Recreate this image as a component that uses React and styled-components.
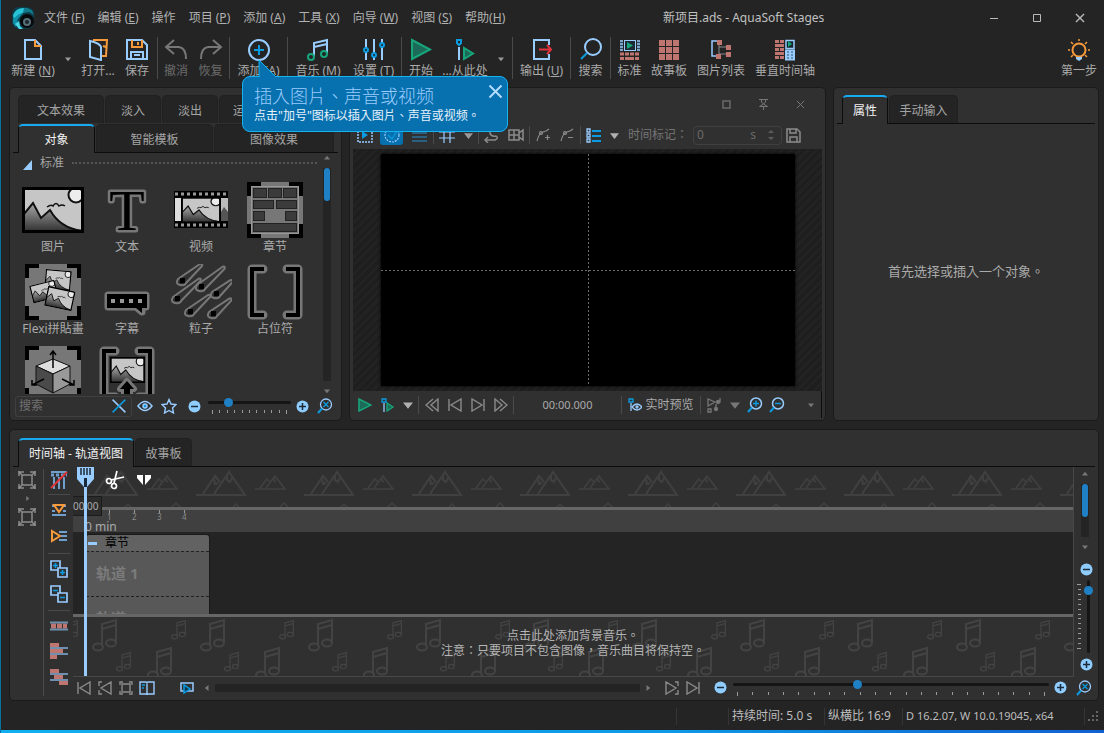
import React from "react";
import styled, { createGlobalStyle, css } from "styled-components";

const c = {
  page: "#242424",
  panel: "#303030",
  edge: "#1a1a1a",
  line: "#0c0c0c",
  sep: "#4a4a4a",
  text: "#aaaaaa",
  dim: "#6a6a6a",
  sky: "#99ccff",
  cyan: "#0a9be0",
  blue: "#1f80c6",
  orange: "#f79a3c",
  green: "#17a67c",
  leaf: "#1c6b58",
  red: "#e0333b",
  brick: "#bf7670",
  grey: "#8a8a8a",
};
const sans = '"Noto Sans", "Noto Sans CJK SC", sans-serif';
const sansTC = '"Noto Sans", "Noto Sans CJK TC", sans-serif';

const Global = createGlobalStyle`
  *, *::before, *::after { box-sizing: border-box; }
  body { margin: 0; background: ${c.page}; }
  body, button, input { font-family: ${sans}; font-size: 12px; line-height: 16px; color: ${c.text}; }
  button { background: none; border: 0; padding: 0; margin: 0; cursor: default; }
  svg { display: block; flex: none; }
`;

/* ---------- page frame ---------- */
const Shell = styled.div`
  display: flex;
  flex-direction: column;
  height: 100vh;
  min-height: 640px;
  min-width: 1000px;
  overflow: hidden;
  border-left: 1px solid #0a6f9f;
  background: ${c.page};
`;
const AccentBar = styled.div`
  height: 3px;
  flex: none;
  background: linear-gradient(90deg, #10b0f0, #0d9ae6 60%, #1260d0);
`;
const Main = styled.main`
  flex: 1;
  min-height: 0;
  display: flex;
  flex-direction: column;
  gap: 8px;
  padding: 0 5px 0 8px;
`;
const Docks = styled.div`
  flex: 1;
  min-height: 0;
  display: flex;
  gap: 7px;
`;
const Panel = styled.section`
  display: flex;
  flex-direction: column;
  min-width: 0;
  min-height: 0;
  background: ${c.panel};
  border: 1px solid ${c.edge};
  border-radius: 5px;
  padding: ${(p) => p.$pad || "7px 3px 2px"};
  flex: ${(p) => p.$flex || "none"};
`;

/* ---------- title bar ---------- */
const TitleBar = styled.header`
  display: flex;
  align-items: center;
  height: 34px;
  flex: none;
  padding: 1px 3px 0 11px;
`;
const MenuNav = styled.nav`
  display: flex;
  gap: 13px;
  margin-left: 10px;
  width: 619px;
`;
const MenuItem = styled.button`
  color: #b2b2b2;
  white-space: nowrap;
`;
const AppTitle = styled.h1`
  margin: 0;
  flex: 1;
  font-size: 12px;
  line-height: 16px;
  font-weight: 400;
  color: #c0c0c0;
  white-space: nowrap;
`;
const WindowButton = styled.button`
  width: 43px;
  height: 30px;
  display: grid;
  place-items: center;
`;

/* ---------- main toolbar ---------- */
const Toolbar = styled.div`
  display: flex;
  height: 53px;
  flex: none;
  padding: 3px 0 0 7px;
`;
const ToolSlot = styled.div`
  position: relative;
  flex: none;
`;
const ToolButton = styled.button`
  display: flex;
  flex-direction: column;
  align-items: center;
  gap: 2px;
  flex: none;
  width: ${(p) => p.$w}px;
  height: 44px;
  color: ${(p) => (p.disabled ? "#6c6c6c" : c.text)};
  white-space: nowrap;
`;
const DropButton = styled.button`
  width: ${(p) => p.$w || 20}px;
  display: grid;
  place-items: center;
  flex: none;
  height: ${(p) => p.$h || 44}px;
`;
const Divider = styled.span`
  flex: none;
  width: 1px;
  height: ${(p) => p.$h || 42}px;
  margin: 0 1px;
  background: ${c.sep};
`;
const Spacer = styled.span`
  flex: 1;
`;

/* ---------- tooltip ---------- */
const Callout = styled.div`
  position: absolute;
  z-index: 5;
  left: 11px;
  top: 39px;
  width: 266px;
  height: 56px;
  padding: 8px 11px;
  background: #0770ae;
  border: 1px solid #16b3f3;
  border-radius: 8px;
  color: #e6f2fb;
  font-family: ${sansTC};
  white-space: nowrap;
`;
const CalloutTitle = styled.strong`
  display: block;
  font-size: 18px;
  line-height: 22px;
  font-weight: 300;
  color: ${c.sky};
`;
const CalloutText = styled.p`
  margin: 0;
  font-size: 12px;
  line-height: 18px;
`;
const CalloutTail = styled.svg`
  position: absolute;
  left: 15px;
  top: -18px;
`;
const CalloutClose = styled.button`
  position: absolute;
  right: 4px;
  top: 7px;
`;

/* ---------- tabs ---------- */
const TabRow = styled.div`
  display: flex;
  gap: 1px;
  flex: none;
  height: 29px;
  padding: 0 4px 0 5px;
  border-bottom: ${(p) => (p.$plain ? 0 : `1px solid ${c.line}`)};
`;
const Tab = styled.button`
  flex: ${(p) => (p.$w ? "none" : "1")};
  width: ${(p) => (p.$w ? `${p.$w}px` : "auto")};
  height: 28px;
  padding: 2px 0 0;
  border-radius: 5px 5px 0 0;
  background: #242424;
  border: 1px solid #202020;
  border-bottom: 0;
  color: #a4a4a4;
  white-space: nowrap;
  text-align: ${(p) => (p.$start ? "left" : "center")};
  text-indent: ${(p) => (p.$start ? "13px" : "0")};
  ${(p) =>
    p.$on &&
    css`
      height: 29px;
      margin-bottom: -1px;
      padding: 0;
      border-color: ${c.line};
      border-top: 2px solid #16aaf0;
      background: ${c.panel};
      color: #f2f2f2;
    `}
`;

/* ---------- object library ---------- */
const Library = styled.div`
  flex: 1;
  min-height: 0;
  display: flex;
  padding: 2px 6px 0 3px;
`;
const LibraryBody = styled.div`
  flex: 1;
  min-width: 0;
  overflow: hidden;
`;
const GroupHead = styled.div`
  display: flex;
  align-items: center;
  gap: 8px;
  height: 16px;
  padding: 0 5px 0 7px;
  color: #a4a4a4;
  &::after {
    content: "";
    flex: 1;
    border-top: 2px dotted #555;
  }
`;
const ItemGrid = styled.div`
  display: grid;
  grid-template-columns: repeat(4, 74px);
  grid-auto-rows: 82px;
  padding-top: 11px;
`;
const Item = styled.button`
  display: flex;
  flex-direction: column;
  align-items: center;
  justify-content: flex-start;
  gap: 1px;
  white-space: nowrap;
`;
const VScroll = styled.div`
  display: flex;
  flex-direction: column;
  align-items: center;
  justify-content: space-between;
  width: 10px;
  flex: ${(p) => p.$flex || "none"};
`;
const VTrack = styled.div`
  flex: 1;
  width: 8px;
  margin: 7px 0;
  background: #242424;
`;
const VThumb = styled.div`
  height: 33px;
  margin: 0 1px;
  border-radius: 3px;
  background: ${c.blue};
`;
const SearchRow = styled.div`
  display: flex;
  align-items: center;
  height: 24px;
  flex: none;
  padding: 0 0 0 2px;
`;
const SearchBox = styled.label`
  display: flex;
  align-items: center;
  width: 117px;
  height: 21px;
  padding: 0 4px 0 3px;
  border: 1px solid #404040;
  border-radius: 3px;
`;
const PlainInput = styled.input`
  flex: 1;
  min-width: 0;
  padding: 0;
  border: 0;
  outline: 0;
  background: none;
  color: ${c.dim};
  &::placeholder {
    color: #707070;
    opacity: 1;
  }
`;

/* ---------- icon buttons and sliders ---------- */
const IconButton = styled.button`
  width: ${(p) => p.$w || 22}px;
  height: ${(p) => p.$h || 22}px;
  flex: none;
  display: flex;
  align-items: center;
  justify-content: center;
  gap: 3px;
  white-space: nowrap;
`;
const IconFill = styled.span`
  display: grid;
  place-items: center;
  width: 23px;
  height: 20px;
  border-radius: 3px;
  background: #0770ae;
`;
const SliderBox = styled.div`
  display: flex;
  flex-direction: ${(p) => (p.$v ? "row-reverse" : "column")};
  gap: 3px;
  flex: ${(p) => (p.$v ? "1" : "none")};
  min-height: 0;
  width: ${(p) => (p.$v ? "auto" : `${p.$w}px`)};
`;
const Range = styled.input`
  appearance: none;
  margin: 0;
  background: none;
  ${(p) =>
    p.$v
      ? "writing-mode: vertical-lr; width: 9px; height: 100%;"
      : "width: 100%; height: 9px;"}
  &::-webkit-slider-runnable-track {
    border-radius: 2px;
    background: #151515;
    ${(p) => (p.$v ? "width: 3px; height: 100%;" : "height: 3px;")}
  }
  &::-webkit-slider-thumb {
    appearance: none;
    width: 9px;
    height: 9px;
    border-radius: 50%;
    background: ${c.blue};
    ${(p) => (p.$v ? "margin-left: -3px;" : "margin-top: -3px;")}
  }
`;
const Ticks = styled.div`
  display: flex;
  justify-content: space-between;
  flex-direction: ${(p) => (p.$v ? "column" : "row")};
  align-items: ${(p) => (p.$v ? "flex-end" : "flex-start")};
  padding: ${(p) => (p.$v ? "4px 0" : "0 4px")};
  & > i {
    background: #9a9a9a;
    width: ${(p) => (p.$v ? 3 : 1)}px;
    height: ${(p) => (p.$v ? 1 : 3)}px;
  }
  & > i:first-child,
  & > i:last-child {
    width: ${(p) => (p.$v ? 4 : 1)}px;
    height: ${(p) => (p.$v ? 1 : 4)}px;
  }
`;

/* ---------- preview ---------- */
const DockCaption = styled.div`
  display: flex;
  justify-content: flex-end;
  height: 32px;
  flex: none;
  padding: 4px 3px 0 0;
`;
const ViewBar = styled.div`
  display: flex;
  align-items: center;
  flex: none;
  height: 28px;
`;
const FieldLabel = styled.label`
  color: #757575;
  font-family: ${sansTC};
  white-space: nowrap;
  width: 69px;
  padding-left: 4px;
`;
const TimeField = styled.div`
  display: flex;
  align-items: center;
  width: 89px;
  height: 19px;
  padding: 0 7px 0 3px;
  border: 1px solid #404040;
  border-radius: 4px;
  color: ${c.dim};
`;
const Unit = styled.span`
  margin-right: 12px;
`;
const Stage = styled.div`
  flex: 1;
  min-height: 0;
  display: grid;
  justify-items: center;
  padding: 5px 27px 5px 28px;
  background: repeating-linear-gradient(135deg, #1e1e1e 0 3px, #222 3px 6px);
`;
const Canvas = styled.div`
  width: 100%;
  height: 100%;
  background:
    repeating-linear-gradient(180deg, #6c6c6c 0 2px, transparent 2px 4px) 50% 0 / 1px 100% no-repeat,
    repeating-linear-gradient(90deg, #6c6c6c 0 2px, transparent 2px 4px) 0 50% / 100% 1px no-repeat,
    #000;
  box-shadow: 0 0 3px #000;
`;
const PlayBar = styled.div`
  display: flex;
  align-items: center;
  flex: none;
  height: 27px;
  border-right: 1px solid ${c.line};
`;
const Clock = styled.output`
  width: 105px;
  text-align: center;
  font-size: 11px;
`;

/* ---------- properties ---------- */
const EmptyNote = styled.p`
  flex: 1;
  display: grid;
  place-items: center;
  margin: 0;
  font-family: ${sansTC};
  font-size: 13px;
  line-height: 18px;
`;

/* ---------- timeline ---------- */
const TimelineBody = styled.div`
  display: flex;
  height: 231px;
`;
const SideTools = styled.div`
  display: flex;
  flex-direction: column;
  align-items: center;
  width: ${(p) => p.$w}px;
  flex: none;
  border-right: ${(p) => (p.$line ? `1px solid ${c.sep}` : 0)};
  padding-right: ${(p) => (p.$line ? 2 : 0)}px;
  margin: 2px 0;
`;
const SideRule = styled.span`
  width: 22px;
  height: 1px;
  flex: none;
  margin: 3px 0;
  background: ${c.sep};
`;
const TimelineMain = styled.div`
  flex: 1;
  min-width: 0;
  display: flex;
  flex-direction: column;
`;
const TrackRow = styled.div`
  display: flex;
  height: 210px;
`;
const Tracks = styled.div`
  position: relative;
  flex: 1;
  min-width: 0;
  display: flex;
  flex-direction: column;
  overflow: hidden;
  border-right: 1px solid #484848;
  border-bottom: 1px solid #484848;
`;
const Deco = styled.div`
  position: relative;
  height: ${(p) => p.$h}px;
  flex: none;
  overflow: hidden;
`;
const DecoArt = styled.svg`
  position: absolute;
  inset: 0;
  width: 100%;
  height: 100%;
`;
const Ruler = styled.div`
  height: 25px;
  flex: none;
  border-top: 3px solid #666;
  background: #404040;
`;
const RulerMarks = styled.div`
  display: flex;
  height: 11px;
  padding-left: 34px;
  font-size: 8px;
  line-height: 8px;
  color: #8a8a8a;
`;
const Mark = styled.span`
  width: 25px;
  display: flex;
  flex-direction: column;
  align-items: flex-start;
  &::before {
    content: "";
    width: 1px;
    height: 3px;
    margin-left: 2px;
    background: #999;
  }
`;
const RulerUnit = styled.span`
  display: block;
  padding-left: 12px;
  line-height: 11px;
`;
const Lane = styled.div`
  height: 82px;
  flex: none;
  overflow: hidden;
  padding: 2px 0 0 13px;
  background: ${c.page};
`;
const Chapter = styled.div`
  width: 124px;
  border: 1px solid #1a1a1a;
  border-left: 0;
  border-radius: 4px 4px 0 0;
  background: #585858;
`;
const ChapterHead = styled.div`
  display: flex;
  align-items: center;
  gap: 8px;
  height: 16px;
  padding-left: 2px;
  color: #000;
  background: #626262;
  border-radius: 4px 4px 0 0;
`;
const Minus = styled.i`
  width: 9px;
  height: 3px;
  background: ${c.sky};
`;
const Track = styled.div`
  height: 45px;
  padding: 11px 0 0 10px;
  border-top: 1px dashed #222;
  font-size: 15px;
  line-height: 20px;
  font-weight: 700;
  color: #7b7b7b;
`;
const MusicLane = styled.div`
  position: relative;
  flex: 1;
  overflow: hidden;
  border-top: 3px solid #666;
  background: ${c.panel};
`;
const MusicNote = styled.p`
  position: relative;
  margin: 0;
  padding-top: 11px;
  text-align: center;
  font-family: ${sansTC};
  line-height: 15px;
  color: #b4b4b4;
`;
const Playhead = styled.div`
  position: absolute;
  left: 11px;
  top: 20px;
  bottom: 0;
  width: 3px;
  background: ${c.sky};
`;
const PlayheadTools = styled.div`
  position: absolute;
  left: 4px;
  top: 0;
  display: flex;
  gap: 11px;
`;
const TimeBadge = styled.div`
  position: absolute;
  left: 0;
  top: 29px;
  width: 29px;
  height: 20px;
  padding-top: 2px;
  overflow: hidden;
  background: #2b2b2b;
  border: 1px solid #1c1c1c;
  border-left: 0;
  font-size: 10px;
  line-height: 14px;
`;
const Zoomer = styled.aside`
  display: flex;
  flex-direction: column;
  align-items: center;
  width: 21px;
  flex: none;
  padding: 4px 0 2px;
`;
const ZoomStep = styled(IconButton)`
  width: 21px;
  padding-left: 4px;
  margin-top: ${(p) => p.$top || 0}px;
`;
const Transport = styled.div`
  display: flex;
  align-items: center;
  height: 21px;
`;
const HTrack = styled.div`
  flex: 1;
  height: 8px;
  background: #242424;
`;
const Gap = styled.span`
  width: ${(p) => p.$w || 5}px;
`;

/* ---------- status bar ---------- */
const StatusBar = styled.footer`
  display: flex;
  align-items: center;
  justify-content: flex-end;
  height: 29px;
  flex: none;
  padding: 2px 5px 0 0;
  color: #bdbdbd;
`;
const StatusCell = styled.span`
  width: ${(p) => p.$w}px;
  height: 17px;
  padding-left: 3px;
  border-left: 1px solid #353535;
  white-space: nowrap;
  font-size: ${(p) => (p.$small ? 11 : 12)}px;
`;

/* ---------- icons ---------- */
const Ic = ({ w = 24, h = 24, s = c.sky, k = 2, f = "none", children }) => (
  <svg width={w} height={h} viewBox={`0 0 ${w} ${h}`} fill={f} stroke={s} strokeWidth={k} aria-hidden="true">
    {children}
  </svg>
);
const Caret = ({ w = 7, color = "#9a9a9a", dir = "down" }) => {
  const rot = { down: 0, up: 180, left: 90, right: 270 }[dir];
  return (
    <svg width={w} height={w} viewBox="0 0 8 8" aria-hidden="true">
      <path d="M0 2h8L4 7z" fill={color} transform={`rotate(${rot} 4 4)`} />
    </svg>
  );
};
const Logo = () => (
  <Ic w={22} h={22} s="none">
    <rect width="22" height="22" rx="7" fill="#0b3d4a" />
    <path d="M1 8Q4 1 11 1l7 1-6 3-6 4-4 5z" fill="#27c4d8" />
    <path d="M1 12l6-5 4-1-5 6-2 8-3-4z" fill="#0f90a8" />
    <path d="M12 1l8 2 2 5-5-3-6 1z" fill="#12788c" />
    <circle cx="15" cy="14" r="7" fill="#07090a" />
    <circle cx="15" cy="15" r="3" fill="#1c262a" stroke="#56707a" />
    <path d="M3 17l4-3 1 5 3 3H7z" fill="#49d6e2" />
  </Ic>
);
const NewIcon = () => (
  <Ic>
    <path d="M4 3h10l6 6v13H4z" />
    <path d="M14 3v6h6" stroke={c.orange} />
  </Ic>
);
const OpenIcon = () => (
  <Ic>
    <path d="M7 3h14l-1 16h-5M20 10l-3-1" stroke={c.orange} />
    <path d="M4 4l4 1q6 2 7 5v13L4 20z" />
  </Ic>
);
const SaveIcon = () => (
  <Ic>
    <path d="M2 3h15l5 5v14H2z" />
    <path d="M7 3v7h10V3M13 5v3" stroke={c.orange} />
    <path d="M6 22v-7h12v7M9 18h6" />
  </Ic>
);
const UndoIcon = ({ flip }) => (
  <Ic s="#777">
    <g transform={flip ? "translate(24 0) scale(-1 1)" : undefined}>
      <path d="M10 3l-8 7 8 7M2 10h13q7 1 7 12" />
    </g>
  </Ic>
);
const AddIcon = () => (
  <Ic>
    <circle cx="12" cy="13" r="10" />
    <path d="M12 8v10M7 13h10" stroke={c.cyan} />
  </Ic>
);
const MusicIcon = () => (
  <Ic>
    <path d="M8 19V6l13-3v13M8 10l13-3" />
    <circle cx="5" cy="20" r="3" stroke={c.green} />
    <circle cx="18" cy="17" r="3" stroke={c.green} />
  </Ic>
);
const SettingsIcon = () => (
  <Ic>
    <path d="M4 2v9M4 15v8M12 2v14M12 20v3M20 2v4M20 10v13" />
    <g stroke={c.cyan}>
      <circle cx="4" cy="13" r="2" />
      <circle cx="12" cy="18" r="2" />
      <circle cx="20" cy="8" r="2" />
    </g>
  </Ic>
);
const StartIcon = () => (
  <Ic s={c.green} f={c.leaf}>
    <path d="M3 3v19l18-9.500z" />
  </Ic>
);
const FromHereIcon = () => (
  <Ic s={c.green}>
    <path d="M11 11v11l9-5.500z" fill={c.leaf} />
    <path d="M6 10v13" stroke={c.sky} />
    <path d="M4 3h4v3l-2 2-2-2z" stroke={c.cyan} />
  </Ic>
);
const ExportIcon = () => (
  <Ic>
    <path d="M19 8V3H4v19h15v-5" />
    <path d="M9 12.500h12M17 8l4 4.500-4 4.500" stroke={c.red} />
  </Ic>
);
const SearchIcon = () => (
  <Ic>
    <circle cx="14" cy="10" r="8" />
    <path d="M8 16l-6 6" stroke={c.cyan} />
  </Ic>
);
const StandardIcon = () => (
  <Ic s="none">
    <rect x="6.500" y="3.500" width="11" height="10" fill="#1c2a33" stroke={c.sky} strokeWidth="1" />
    <path d="M9 5v7l6-3.500z" fill={c.green} />
    <path d="M2 3h3v11H2zM19 3h3v11h-3z" fill="#7fa6c8" />
    <path d="M2 5.500h20M2 8.500h20M2 11.500h20" stroke="#2f4a60" strokeWidth="1" strokeDasharray="3 14" />
    <path d="M2 17h20" stroke={c.brick} strokeWidth="3" strokeDasharray="4 1" />
    <path d="M2 21.500h20" stroke={c.brick} strokeWidth="3" strokeDasharray="4 1 9 1" />
  </Ic>
);
const BoardIcon = () => (
  <Ic s="none" f={c.brick}>
    {[2, 9, 16].map((y) => [2, 9, 16].map((x) => <rect key={x + y * 30} x={x} y={y + 1} width="6" height="6" />))}
  </Ic>
);
const ListIcon = () => (
  <Ic k="1">
    <path d="M8 4H3v15h4" stroke={c.sky} strokeWidth="1.500" />
    <path d="M10 7v12M10 10h7M10 17h7" stroke={c.grey} />
    <g fill={c.brick} stroke="none">
      <rect x="8" y="3" width="5" height="5" />
      <rect x="17" y="8" width="5" height="5" />
      <rect x="17" y="15" width="5" height="5" />
      <rect x="7" y="17" width="5" height="5" />
    </g>
  </Ic>
);
const VerticalIcon = () => (
  <Ic s="none">
    <path d="M2 4.500h9M2 12.500h9M2 20.500h9" stroke={c.brick} strokeWidth="3" strokeDasharray="4 1" />
    <path d="M2 8.500h9M2 16.500h9" stroke={c.brick} strokeWidth="3" />
    <rect x="13" y="3.500" width="8" height="8" fill="#15272c" stroke={c.sky} strokeWidth="1.500" />
    <path d="M15 4v6l4-3z" fill={c.green} />
    <rect x="13" y="13.500" width="8" height="9" fill="#33526e" stroke={c.sky} />
    <path d="M13 16.500h9M13 19.500h9M17 13v9" stroke={c.sky} />
  </Ic>
);
const BulbIcon = () => (
  <Ic s={c.orange}>
    <circle cx="12" cy="13" r="6.500" />
    <path d="M12 2v2M4 5l2 2M20 5l-2 2M1 13h2M21 13h2M4 20l2-2M20 20l-2-2" strokeWidth="1.500" />
    <path d="M9 20h6v2l-3 2-3-2z" fill={c.sky} stroke="none" />
  </Ic>
);
const CrossIcon = ({ size = 10, color = "#b8b8b8", back = color, k = 1.5 }) => (
  <svg width={size} height={size} viewBox="0 0 10 10" strokeWidth={(k * 10) / size} aria-hidden="true">
    <path d="M1 1l8 8" stroke={color} />
    <path d="M9 1L1 9" stroke={back} />
  </svg>
);
const CircleSign = ({ plus }) => (
  <Ic w={13} h={13} s="#1c2b3a" k="1.500">
    <circle cx="6.500" cy="6.500" r="6" fill="#8fcdff" stroke="none" />
    <path d={plus ? "M3 6.500h7M6.500 3v7" : "M3 6.500h7"} />
  </Ic>
);
const FitIcon = () => (
  <Ic w={16} h={16} k="1.300">
    <circle cx="9" cy="6.500" r="5.500" />
    <path d="M5 10.500L1 15" stroke={c.cyan} strokeWidth="2" />
    <path d="M6.500 4l5 5M11.500 4l-5 5" stroke={c.cyan} />
  </Ic>
);
const ZoomIcon = ({ plus }) => (
  <Ic w={16} h={16} k="1.500">
    <circle cx="9" cy="6.500" r="5.500" />
    <path d="M5 10.500L1 15" stroke={c.cyan} strokeWidth="2" />
    <path d={plus ? "M6 6.500h6M9 3.500v6" : "M6 6.500h6"} stroke={c.cyan} />
  </Ic>
);
const EyeIcon = () => (
  <Ic w={16} h={12} k="1.500">
    <path d="M1 6q7-9 14 0-7 9-14 0z" />
    <circle cx="8" cy="6" r="2" fill={c.cyan} />
  </Ic>
);
const StarIcon = () => (
  <Ic w={16} h={16} k="1.400">
    <path d="M8 1.500l2 4.500 5 .5-3.500 3.500 1 5L8 12.500 3.500 15l1-5L1 6.500 6 6z" />
  </Ic>
);

/* picture used by several library items */
const Landscape = ({ x = 0, y = 0, w = 62, h = 46 }) => (
  <svg x={x} y={y} width={w} height={h} viewBox="0 0 62 46" preserveAspectRatio="none">
    <rect x="1.500" y="1.500" width="59" height="43" fill="#c6c6c6" stroke="none" />
    <path d="M2 27l9-11 8 15 9-8q10 18 32 20v1H2z" fill="url(#slope)" stroke="none" />
    <path d="M2 27l9-11 8 15 9-8q10 18 32 21" fill="none" stroke="#111" strokeWidth="2" />
    <circle cx="54" cy="8" r="7.500" fill="#ececec" stroke="#111" strokeWidth="2" />
    <path d="M25 20q4-3 6-1 3-5 6 0 3-2 6 0" fill="none" stroke="#111" strokeWidth="1.500" />
    <rect x="1.500" y="1.500" width="59" height="43" fill="none" stroke="#000" strokeWidth="3" />
  </svg>
);
const Slope = () => (
  <defs>
    <linearGradient id="slope" x1="0" y1="0" x2="0" y2="1">
      <stop offset="0" stopColor="#aaa" />
      <stop offset="1" stopColor="#333" />
    </linearGradient>
  </defs>
);
const Art = ({ children }) => (
  <svg width="62" height="56" viewBox="0 0 62 56" fill="none" aria-hidden="true">
    {children}
  </svg>
);
const Frame = () => (
  <>
    <path d="M3 0h56v56H3z" fill="#777" />
    <path d="M3 0h14v4H7v10H3zM59 0H45v4h10v10h4zM3 56h14v-4H7V42H3zM59 56H45v-4h10V42h4z" fill="#000" />
  </>
);
const Bracket = () => (
  <>
    <path d="M19 5H8v46h11M43 5h11v46H43" stroke="#777" strokeWidth="9" strokeLinejoin="round" strokeLinecap="round" />
    <path d="M20 5H8v46h12M42 5h12v46H42" stroke="#000" strokeWidth="4" />
  </>
);
const ImageArt = () => (
  <Art>
    <Slope />
    <Landscape y={5} />
  </Art>
);
const TextArt = () => (
  <Art>
    <text x="31" y="48" textAnchor="middle" fontFamily="Liberation Serif, serif" fontSize="58" fill="#000" stroke="#777" strokeWidth="5" strokeLinejoin="round" paintOrder="stroke">
      T
    </text>
  </Art>
);
const VideoArt = () => (
  <Art>
    <rect x="4" y="9" width="54" height="37" fill="#000" />
    <path d="M5 12h52M5 43h52" stroke="#999" strokeWidth="3" strokeDasharray="3 3" />
    <rect x="5" y="16" width="7" height="23" fill="#ddd" />
    <Landscape x={11} y={15} w={40} h={26} />
    <rect x="51" y="16" width="7" height="23" fill="#bbb" />
    <path d="M51 30l3-5 4 5v9h-7z" fill="#555" />
  </Art>
);
const ChapterArt = () => (
  <Art>
    <Frame />
    <g fill="#3b3b3b" stroke="#222">
      <rect x="9.500" y="6.500" width="13" height="9" />
      <rect x="24.500" y="6.500" width="13" height="9" />
      <rect x="39.500" y="6.500" width="13" height="9" />
      <rect x="9.500" y="18.500" width="20" height="8" />
      <rect x="32.500" y="18.500" width="20" height="8" />
      <rect x="9.500" y="29.500" width="11" height="9" />
      <rect x="41.500" y="29.500" width="11" height="9" />
      <rect x="9.500" y="41.500" width="43" height="8" />
    </g>
    <rect x="7.500" y="4.500" width="47" height="47" stroke="#999" />
  </Art>
);
const FlexiArt = () => (
  <Art>
    <Frame />
    <g transform="rotate(5 36 16)"><Landscape x={23} y={6} w={26} h={20} /></g>
    <g transform="rotate(-14 20 28)"><Landscape x={9} y={19} w={26} h={18} /></g>
    <g transform="rotate(12 40 34)"><Landscape x={24} y={25} w={28} h={20} /></g>
  </Art>
);
const SubtitleArt = () => (
  <Art>
    <path d="M12 31h38v12h-4v5l-6-5H12z" stroke="#777" strokeWidth="7" fill="#777" strokeLinejoin="round" />
    <path d="M11 30h40v14h-5v5l-6-5H11z" fill="#000" />
    <path d="M15 35h4v4h-4zM24 35h4v4h-4zM33 35h4v4h-4zM42 35h4v4h-4z" fill="#999" />
  </Art>
);
const Streak = ({ x, y, l = 1 }) => (
  <g transform={`translate(${x} ${y})`}>
    <path d={`M-4 -1L${18 * l} ${-16 * l}q3 -1 2 2L4 3q-1 3 -6 2t-2 -6z`} stroke="#777" strokeWidth="2" strokeLinejoin="round" />
    <path d="M-2 -2h5v5h-5z" fill="#000" />
  </g>
);
const ParticleArt = () => (
  <Art>
    <Streak x={12} y={16} />
    <Streak x={31} y={22} l={1.2} />
    <Streak x={46} y={29} l={0.8} />
    <Streak x={7} y={34} l={1.2} />
    <Streak x={20} y={47} />
    <Streak x={43} y={49} l={0.9} />
  </Art>
);
const PlaceholderArt = () => (
  <Art>
    <Bracket />
  </Art>
);
const CubeArt = () => (
  <Art>
    <Frame />
    <path d="M14 20l17-7 17 7-17 8z" fill="#ddd" stroke="#111" />
    <path d="M14 20l17 8v19l-17-9z" fill="#4a4a4a" stroke="#111" />
    <path d="M48 20l-17 8v19l17-9z" fill="#999" stroke="#111" />
    <path d="M31 22V5M28 9l3-4 3 4M22 33l-12 6M10 34v5h5M40 33l12 6M52 34v5h-5" stroke="#000" strokeWidth="1.500" />
  </Art>
);
const UploadArt = () => (
  <Art>
    <Bracket />
    <Landscape x={14} y={11} w={35} h={26} />
    <path d="M31 35l7 8h-4v10h-6V43h-4z" fill="#000" stroke="#777" strokeWidth="6" paintOrder="stroke" strokeLinejoin="round" />
  </Art>
);

const MountainArt = () => (
  <DecoArt aria-hidden="true">
    <defs>
      <pattern id="hills" width="108" height="64" patternUnits="userSpaceOnUse">
        <g fill="none" stroke="#404040" strokeWidth="2">
          <path d="M15 28h49L48 5 33 27M22 27L34 9l5 6M46 8v5l3 2 2-4M33 12l1 5 3-1" />
          <path strokeWidth="1.500" d="M74 22h30L94 9l-9 12M79 21l7-9 3 3M93 11v3l2 1" />
          <path strokeWidth="1.500" d="M50 42l5-5 5 5M98 41l5-5 5 5" />
        </g>
      </pattern>
    </defs>
    <rect width="100%" height="100%" fill="url(#hills)" />
  </DecoArt>
);
const NoteShape = ({ x, y, k }) => (
  <g transform={`translate(${x} ${y}) scale(${k})`}>
    <path d="M10 27V5l14-4v22M10 10l14-4" />
    <ellipse cx="6" cy="28" rx="5" ry="3.500" />
    <ellipse cx="19" cy="24" rx="5" ry="3.500" />
  </g>
);
const NotesArt = () => (
  <DecoArt aria-hidden="true">
    <defs>
      <pattern id="notes" width="108" height="64" patternUnits="userSpaceOnUse">
        <g fill="none" stroke="#434343" strokeWidth="2">
          <NoteShape x={19} y={2} k={1} />
          <NoteShape x={98} y={3} k={0.6} />
          <NoteShape x={-10} y={3} k={0.6} />
          <NoteShape x={43} y={35} k={0.6} />
          <NoteShape x={74} y={30} k={1} />
        </g>
      </pattern>
    </defs>
    <rect width="100%" height="100%" fill="url(#notes)" />
  </DecoArt>
);

/* small timeline icons */
const GroupIcon = () => (
  <Ic w={18} h={18} s={c.grey} k="1.500">
    <path d="M4 4h10v10H4zM0 1h6M1 0v5M18 1h-6M17 0v5M0 17h6M1 18v-5M18 17h-6M17 18v-5M1 1l4 4M17 1l-4 4M1 17l4-4M17 17l-4-4" />
  </Ic>
);
const FilterIcon = () => (
  <Ic w={18} h={18} k="2" s="#6f9fca">
    <path d="M4 6v12M9 6v12M14 6v12M1 1h16" />
    <path d="M1 4h16" strokeWidth="3" strokeDasharray="3 2" />
    <path d="M1 17L17 1" stroke={c.red} strokeWidth="2" />
  </Ic>
);
const InsertIcon = ({ right }) => (
  <Ic w={16} h={14} s="#6f9fca" k="2">
    <path d={right ? "M8 3h8M10 7h6M8 11h8" : "M1 3h3M12 3h3M1 8h3M12 8h3M1 12h14"} />
    <path d={right ? "M1 2v10l8-5z" : "M3 2h10l-5 7z"} stroke={c.orange} />
  </Ic>
);
const BoxesIcon = ({ plus }) => (
  <Ic w={18} h={18} k="1.700">
    <path d="M1 1h9v9H1z" />
    <path d="M8 8h9v9H8z" fill={c.panel} />
    <path d={plus ? "M3 5.500h5M5.500 3v5M10 12.500h5M12.500 10v5" : "M3 5.500h5M10 12.500h5"} stroke={c.cyan} />
  </Ic>
);
const BarsIcon = ({ kind }) => (
  <Ic w={18} h={16} s="none">
    {kind === 0 && (
      <>
        <path d="M1 8h16" stroke={c.brick} strokeWidth="5" strokeDasharray="5 1" />
        <path d="M0 4.500h18M0 11.500h18" stroke="#6f8fae" />
      </>
    )}
    {kind === 1 && (
      <>
        <path d="M0 2h9M0 8h13M0 14h7" stroke={c.brick} strokeWidth="4" />
        <path d="M0 5h18M0 11h18" stroke="#6f8fae" strokeWidth="2" />
      </>
    )}
    {kind === 2 && (
      <>
        <path d="M0 2h9M4 8h9M9 14h9" stroke={c.brick} strokeWidth="4" />
        <path d="M0 5h18M0 11h18" stroke="#6f8fae" strokeWidth="2" />
      </>
    )}
  </Ic>
);
const SkipIcon = ({ flip, d }) => (
  <Ic w={14} h={14} s={c.grey} k="1.400">
    <g transform={flip ? "translate(14 0) scale(-1 1)" : undefined}>
      <path d={d} />
    </g>
  </Ic>
);
const skip = "M1 1v12M13 1v12L3 7z";
const skipRange = "M4 1H1v4M4 13H1V9M13 1v12L3 7z";
const doubled = "M8 1L1 7l7 6M13 1v12L6 7z";

const Slider = ({ label, w, count, v, value }) => (
  <SliderBox $w={w} $v={v}>
    <Range type="range" aria-label={label} $v={v} min="0" max="100" defaultValue={value} />
    <Ticks $v={v}>
      {Array.from({ length: count }, (_, i) => (
        <i key={i} />
      ))}
    </Ticks>
  </SliderBox>
);

const menus = [
  ["文件 ", "F"], ["编辑 ", "E"], ["操作"], ["项目 ", "P"], ["添加 ", "A"],
  ["工具 ", "X"], ["向导 ", "W"], ["视图 ", "S"], ["帮助", "H"],
];
const Accel = ({ text, k }) => (
  <>
    {text}
    {k && <>(<u>{k}</u>)</>}
  </>
);
const Tool = ({ w, icon, text, k, off }) => (
  <ToolButton $w={w} disabled={off}>
    {icon}
    <span><Accel text={text} k={k} /></span>
  </ToolButton>
);
const items = [
  ["图片", ImageArt], ["文本", TextArt], ["视频", VideoArt], ["章节", ChapterArt],
  ["Flexi拼貼畫", FlexiArt], ["字幕", SubtitleArt], ["粒子", ParticleArt], ["占位符", PlaceholderArt],
];
const moreItems = [["cube", CubeArt], ["upload", UploadArt]];

function MainToolbar() {
  return (
    <Toolbar>
      <Tool w={50} icon={<NewIcon />} text="新建 " k="N" />
      <DropButton aria-label="新建选项"><Caret w={6} /></DropButton>
      <Tool w={40} icon={<OpenIcon />} text="打开..." />
      <Tool w={38} icon={<SaveIcon />} text="保存" />
      <Divider />
      <Tool w={34} icon={<UndoIcon />} text="撤消" off />
      <Tool w={35} icon={<UndoIcon flip />} text="恢复" off />
      <Divider />
      <ToolSlot>
        <Tool w={55} icon={<AddIcon />} text="添加 " k="A" />
        <Callout role="tooltip">
          <CalloutTail width="20" height="20" viewBox="0 0 20 20" aria-hidden="true">
            <path d="M1 20V1l17 17v2z" fill="#0770ae" />
            <path d="M1 18V1l17 17" fill="none" stroke="#16b3f3" />
          </CalloutTail>
          <CalloutTitle>插入图片、声音或视频</CalloutTitle>
          <CalloutText>点击"加号"图标以插入图片、声音或视频。</CalloutText>
          <CalloutClose aria-label="关闭提示"><CrossIcon size={15} color="#b4dcff" k={2} /></CalloutClose>
        </Callout>
      </ToolSlot>
      <Divider />
      <Tool w={58} icon={<MusicIcon />} text="音乐 " k="M" />
      <Tool w={53} icon={<SettingsIcon />} text="设置 " k="T" />
      <Divider />
      <Tool w={36} icon={<StartIcon />} text="开始" />
      <Tool w={52} icon={<FromHereIcon />} text="...从此处" />
      <DropButton aria-label="播放选项"><Caret w={6} /></DropButton>
      <Divider />
      <Tool w={55} icon={<ExportIcon />} text="输出 " k="U" />
      <Divider />
      <Tool w={37} icon={<SearchIcon />} text="搜索" />
      <Divider />
      <Tool w={35} icon={<StandardIcon />} text="标准" />
      <Tool w={44} icon={<BoardIcon />} text="故事板" />
      <Tool w={60} icon={<ListIcon />} text="图片列表" />
      <Tool w={68} icon={<VerticalIcon />} text="垂直时间轴" />
      <Spacer />
      <Tool w={50} icon={<BulbIcon />} text="第一步" />
    </Toolbar>
  );
}

function ObjectsPanel() {
  return (
    <Panel $flex="0 0 333px">
      <TabRow $plain>
        <Tab $w={86}>文本效果</Tab>
        <Tab $w={56}>淡入</Tab>
        <Tab $w={56}>淡出</Tab>
        <Tab $start>运动路径</Tab>
      </TabRow>
      <TabRow>
        <Tab $w={77} $on>对象</Tab>
        <Tab $w={117}>智能模板</Tab>
        <Tab>图像效果</Tab>
      </TabRow>
      <Library>
        <LibraryBody>
          <GroupHead>
            <Ic w={9} h={16} s="none"><path d="M9 5v10H0z" fill={c.sky} /></Ic>
            标准
          </GroupHead>
          <ItemGrid>
            {items.map(([name, Pic]) => (
              <Item key={name}><Pic />{name}</Item>
            ))}
            {moreItems.map(([name, Pic]) => (
              <Item key={name} aria-label={name}><Pic /></Item>
            ))}
          </ItemGrid>
        </LibraryBody>
        <VScroll>
          <Caret w={6} dir="up" color="#777" />
          <VTrack><VThumb /></VTrack>
          <Caret w={6} color="#777" />
        </VScroll>
      </Library>
      <SearchRow>
        <SearchBox>
          <PlainInput aria-label="搜索" placeholder="搜索" />
          <CrossIcon size={16} color={c.sky} back={c.cyan} k={1.5} />
        </SearchBox>
        <IconButton $w={26} aria-label="显示"><EyeIcon /></IconButton>
        <IconButton aria-label="收藏"><StarIcon /></IconButton>
        <IconButton $w={28} aria-label="缩小"><CircleSign /></IconButton>
        <Slider label="图标大小" w={83} count={11} value={21} />
        <IconButton aria-label="放大"><CircleSign plus /></IconButton>
        <IconButton $w={24} aria-label="重置大小"><FitIcon /></IconButton>
      </SearchRow>
    </Panel>
  );
}

function PreviewPanel() {
  return (
    <Panel $flex="1" $pad="1px 3px 2px 3px">
      <DockCaption>
        <IconButton $w={37} aria-label="最大化"><Ic w={9} h={9} s="#6a6a6a" k="1.500"><path d="M1 1h7v7H1z" /></Ic></IconButton>
        <IconButton $w={37} aria-label="固定"><Ic w={11} h={12} s="#777" k="1"><path d="M1 1.500h9M3.500 1v3l2 2-4 2.500h8l-4-2.500 2-2V1M5.500 8v4" /></Ic></IconButton>
        <IconButton $w={37} aria-label="关闭"><CrossIcon size={9} color="#777" k={1} /></IconButton>
      </DockCaption>
      <ViewBar>
        <IconButton $w={24} $h={20} aria-label="选择">
          <Ic w={16} h={16} k="1.500"><path d="M1 1h14v14H1z" strokeDasharray="2 1" /><path d="M5 4v8l6-4z" fill={c.cyan} stroke="none" /></Ic>
        </IconButton>
        <IconButton $w={29} $h={20} aria-label="旋转">
          <IconFill><Ic w={18} h={18} k="1.200" s={c.cyan}><circle cx="9" cy="9" r="7" strokeDasharray="2 1" stroke={c.sky} /><path d="M5 9l4 4 5-8" /></Ic></IconFill>
        </IconButton>
        <IconButton $w={26} $h={20} aria-label="图层"><Ic w={15} h={15} s="#2c6f9c" k="1.500"><path d="M0 2h15M0 5h15M0 9h15M0 13h15" /></Ic></IconButton>
        <Divider $h={18} />
        <IconButton $w={24} $h={20} aria-label="网格"><Ic w={16} h={16} k="1.200"><path d="M0 5h16M0 11h16M5 0v16M11 0v16" /></Ic></IconButton>
        <DropButton $w={18} $h={20} aria-label="网格选项"><Caret w={9} /></DropButton>
        <Divider $h={18} />
        <IconButton $w={24} $h={20} aria-label="曲线"><Ic w={16} h={16} s={c.grey} k="1.500"><path d="M13 1Q5 2 6 6t6 3q3 2-1 4H1M4 10l-3 3 3 3" /></Ic></IconButton>
        <IconButton $w={24} $h={20} aria-label="摄像机"><Ic w={16} h={14} s={c.grey} k="1.500"><path d="M1 2h10v10H1zM11 5l4-3v10l-4-3M6 2v10M1 7h10" /></Ic></IconButton>
        <Divider $h={18} />
        <IconButton $w={24} $h={20} aria-label="添加路径点"><Ic w={14} h={14} s={c.grey} k="1.200"><path d="M1 13Q3 5 7 4t6-3M9 9.500h5M11.500 7v5" /><circle cx="5" cy="5" r="1.500" /></Ic></IconButton>
        <IconButton $w={24} $h={20} aria-label="删除路径点"><Ic w={14} h={14} s={c.grey} k="1.200"><path d="M1 13Q3 5 7 4t6-3M8 9.500h5" /><circle cx="5" cy="5" r="1.500" /></Ic></IconButton>
        <Divider $h={18} />
        <IconButton $w={22} $h={20} aria-label="列表"><Ic w={15} h={15}><path d="M6 3h9M6 8h9M6 13h9" stroke={c.cyan} /><path d="M1 1h3v3H1zM1 6h3v3H1zM1 11h3v3H1z" strokeWidth="1.300" /></Ic></IconButton>
        <DropButton $w={20} $h={20} aria-label="列表选项"><Caret w={9} color="#b0b0b0" /></DropButton>
        <FieldLabel htmlFor="mark">时间标记：</FieldLabel>
        <TimeField>
          <PlainInput id="mark" defaultValue="0" />
          <Unit>s</Unit>
          <Ic w={6} h={12} s="none" f="#5c5c5c"><path d="M0 4l3-3 3 3zM0 8l3 3 3-3z" /></Ic>
        </TimeField>
        <IconButton $w={23} $h={20} aria-label="保存标记"><Ic w={15} h={15} s={c.grey} k="1.500"><path d="M1 1h10l3 3v10H1zM4 1v4h6V1M4 14V9h7v5" /></Ic></IconButton>
      </ViewBar>
      <Stage><Canvas /></Stage>
      <PlayBar>
        <IconButton $w={24} aria-label="播放"><Ic w={14} h={14} s={c.green} f={c.leaf} k="1.500"><path d="M1 1v12l12-6z" /></Ic></IconButton>
        <IconButton aria-label="从此处播放"><Ic w={14} h={14} s={c.green} k="1.300"><path d="M6 5v8l6-4z" fill={c.leaf} /><path d="M3 5v9" stroke={c.sky} /><path d="M1 1h4v3H1z" stroke={c.cyan} /></Ic></IconButton>
        <DropButton $w={18} $h={22} aria-label="播放选项"><Caret w={10} color="#b0b0b0" /></DropButton>
        <Divider $h={18} />
        <IconButton $w={23} aria-label="后退"><SkipIcon d={doubled} /></IconButton>
        <IconButton $w={23} aria-label="上一个"><SkipIcon d={skip} /></IconButton>
        <IconButton $w={23} aria-label="下一个"><SkipIcon d={skip} flip /></IconButton>
        <IconButton $w={23} aria-label="快进"><SkipIcon d={doubled} flip /></IconButton>
        <Divider $h={18} />
        <Clock>00:00.000</Clock>
        <Divider $h={18} />
        <IconButton $w={76}>
          <Ic w={14} h={14} k="1.300"><path d="M3 5v8" /><path d="M1 1h4v3H1z" stroke={c.cyan} /><path d="M4 9q5-6 10 0-5 6-10 0z" /><circle cx="9" cy="9" r="1" /></Ic>
          实时预览
        </IconButton>
        <Divider $h={18} />
        <IconButton $w={24} aria-label="音频"><Ic w={16} h={16} s="#777" k="1.300"><path d="M2 2v7l7-4zM14 1v4h-3M10 7v5M2 12h3v3H2z" /><circle cx="10" cy="12" r="1.500" fill="#777" /><circle cx="12" cy="5" r="1.500" fill="#777" /></Ic></IconButton>
        <DropButton $w={18} $h={22} aria-label="音频选项"><Caret w={10} color="#777" /></DropButton>
        <IconButton aria-label="放大"><ZoomIcon plus /></IconButton>
        <IconButton aria-label="缩小"><ZoomIcon /></IconButton>
        <Spacer />
        <DropButton $h={22} aria-label="更多"><Caret w={6} color="#777" /></DropButton>
      </PlayBar>
    </Panel>
  );
}

function TimelinePanel() {
  return (
    <Panel $pad="8px 3px 2px">
      <TabRow>
        <Tab $w={116} $on>时间轴 - 轨道视图</Tab>
        <Tab $w={57}>故事板</Tab>
      </TabRow>
      <TimelineBody>
        <SideTools $w={31} $line>
          <IconButton aria-label="组合"><GroupIcon /></IconButton>
          <DropButton $h={15} aria-label="组合选项"><Caret w={5} dir="right" color="#777" /></DropButton>
          <IconButton aria-label="取消组合"><GroupIcon /></IconButton>
        </SideTools>
        <SideTools $w={29}>
          <IconButton aria-label="过滤轨道"><FilterIcon /></IconButton>
          <SideRule />
          <IconButton $h={24} aria-label="向下插入"><InsertIcon /></IconButton>
          <IconButton $h={28} aria-label="向右插入"><InsertIcon right /></IconButton>
          <SideRule />
          <IconButton $h={24} aria-label="展开"><BoxesIcon plus /></IconButton>
          <IconButton $h={26} aria-label="折叠"><BoxesIcon /></IconButton>
          <SideRule />
          <IconButton $h={24} aria-label="排列一"><BarsIcon kind={0} /></IconButton>
          <IconButton $h={26} aria-label="排列二"><BarsIcon kind={1} /></IconButton>
          <IconButton $h={26} aria-label="排列三"><BarsIcon kind={2} /></IconButton>
        </SideTools>
        <TimelineMain>
          <TrackRow>
            <Tracks>
              <Deco $h={40}><MountainArt /></Deco>
              <Ruler>
                <RulerMarks>{[1, 2, 3, 4].map((n) => <Mark key={n}>{n}</Mark>)}</RulerMarks>
                <RulerUnit>0 min</RulerUnit>
              </Ruler>
              <Lane>
                <Chapter>
                  <ChapterHead><Minus />章节</ChapterHead>
                  <Track>轨道 1</Track>
                  <Track>轨道 2</Track>
                </Chapter>
              </Lane>
              <MusicLane>
                <NotesArt />
                <MusicNote>
                  点击此处添加背景音乐。<br />
                  注意：只要项目不包含图像，音乐曲目将保持空。
                </MusicNote>
              </MusicLane>
              <TimeBadge>00:00</TimeBadge>
              <Playhead />
              <PlayheadTools>
                <Ic w={17} h={21} s="#1a2a3a" k="1"><path d="M0 0h17v12l-7 8H7l-7-8z" fill={c.sky} stroke="none" /><path d="M4 1v7M7 1v7M10 1v7M13 1v7" strokeWidth="1.500" /><path d="M8.500 11v9" strokeWidth="3" /></Ic>
                <Ic w={20} h={23} s="#fff" k="1.700"><circle cx="4" cy="14" r="2.500" /><circle cx="9" cy="19" r="2.500" /><path d="M6 13l13-3M9 16l3-12" /></Ic>
                <Ic w={16} h={23} s="none" f="#fff"><path d="M1 8h6v10l-6-7zM9 8h6v3l-6 7z" /></Ic>
              </PlayheadTools>
            </Tracks>
            <Zoomer>
              <VScroll $flex="0 0 79px">
                <Caret w={6} dir="up" color="#777" />
                <VTrack><VThumb /></VTrack>
                <Caret w={6} color="#777" />
              </VScroll>
              <ZoomStep $top={8} aria-label="缩小轨道"><CircleSign /></ZoomStep>
              <Slider v label="轨道高度" count={14} value={10} />
              <ZoomStep aria-label="放大轨道"><CircleSign plus /></ZoomStep>
            </Zoomer>
          </TrackRow>
          <Transport>
            <IconButton $w={21} $h={20} aria-label="开头"><SkipIcon d={skip} /></IconButton>
            <IconButton $w={21} $h={20} aria-label="区域开头"><SkipIcon d={skipRange} /></IconButton>
            <IconButton $w={21} $h={20} aria-label="全部"><SkipIcon d="M3 3h8v8H3zM1 4V1h3M10 1h3v3M1 10v3h3M10 13h3v-3" /></IconButton>
            <IconButton $w={21} $h={20} aria-label="章节"><Ic w={16} h={14} k="1.400"><path d="M1 1h6l1 1 1-1h6v12H9l-1 1-1-1H1zM8 1v12" /><path d="M3 4h3M3 7h2" stroke={c.cyan} /></Ic></IconButton>
            <Gap $w={13} />
            <IconButton $w={34} $h={20} aria-label="跟随播放"><Ic w={14} h={13} k="1.500"><path d="M1 2h12v8H1z" /><path d="M4 4v8l6-4z" stroke={c.cyan} fill="#103a50" /></Ic></IconButton>
            <Caret w={6} dir="left" color="#777" />
            <Gap />
            <HTrack />
            <Gap />
            <Caret w={6} dir="right" color="#777" />
            <Gap $w={10} />
            <IconButton $w={21} $h={20} aria-label="区域结尾"><SkipIcon d={skipRange} flip /></IconButton>
            <IconButton $w={21} $h={20} aria-label="结尾"><SkipIcon d={skip} flip /></IconButton>
            <Gap />
            <IconButton $w={25} $h={20} aria-label="缩小时间"><CircleSign /></IconButton>
            <Slider label="时间缩放" w={316} count={21} value={39} />
            <IconButton $w={23} $h={20} aria-label="放大时间"><CircleSign plus /></IconButton>
            <IconButton $w={23} $h={20} aria-label="适合窗口"><FitIcon /></IconButton>
          </Transport>
        </TimelineMain>
      </TimelineBody>
    </Panel>
  );
}

export default function App() {
  return (
    <Shell>
      <Global />
      <TitleBar>
        <Logo />
        <MenuNav>
          {menus.map(([t, k]) => (
            <MenuItem key={t}><Accel text={t} k={k} /></MenuItem>
          ))}
        </MenuNav>
        <AppTitle>新项目.ads - AquaSoft Stages</AppTitle>
        <WindowButton aria-label="最小化"><Ic w={10} h={10} s="#b8b8b8" k="1"><path d="M1 5.500h8" /></Ic></WindowButton>
        <WindowButton aria-label="最大化"><Ic w={10} h={10} s="#b8b8b8" k="1"><path d="M1.500 1.500h7v7h-7z" /></Ic></WindowButton>
        <WindowButton aria-label="关闭"><CrossIcon /></WindowButton>
      </TitleBar>
      <MainToolbar />
      <Main>
        <Docks>
          <ObjectsPanel />
          <PreviewPanel />
          <Panel $flex="0 0 266px">
            <TabRow>
              <Tab $w={46} $on>属性</Tab>
              <Tab $w={69}>手动输入</Tab>
            </TabRow>
            <EmptyNote>首先选择或插入一个对象。</EmptyNote>
          </Panel>
        </Docks>
        <TimelinePanel />
      </Main>
      <StatusBar>
        <StatusCell $w={52} />
        <StatusCell $w={96}>持续时间: 5.0 s</StatusCell>
        <StatusCell $w={78}>纵横比 16:9</StatusCell>
        <StatusCell $w={182} $small>D 16.2.07, W 10.0.19045, x64</StatusCell>
        <StatusCell $w={4} />
        <Ic w={11} h={11} s="none" f="#666"><path d="M8 0h2v2H8zM8 4h2v2H8zM4 4h2v2H4zM8 8h2v2H8zM4 8h2v2H4zM0 8h2v2H0z" /></Ic>
      </StatusBar>
      <AccentBar />
    </Shell>
  );
}
